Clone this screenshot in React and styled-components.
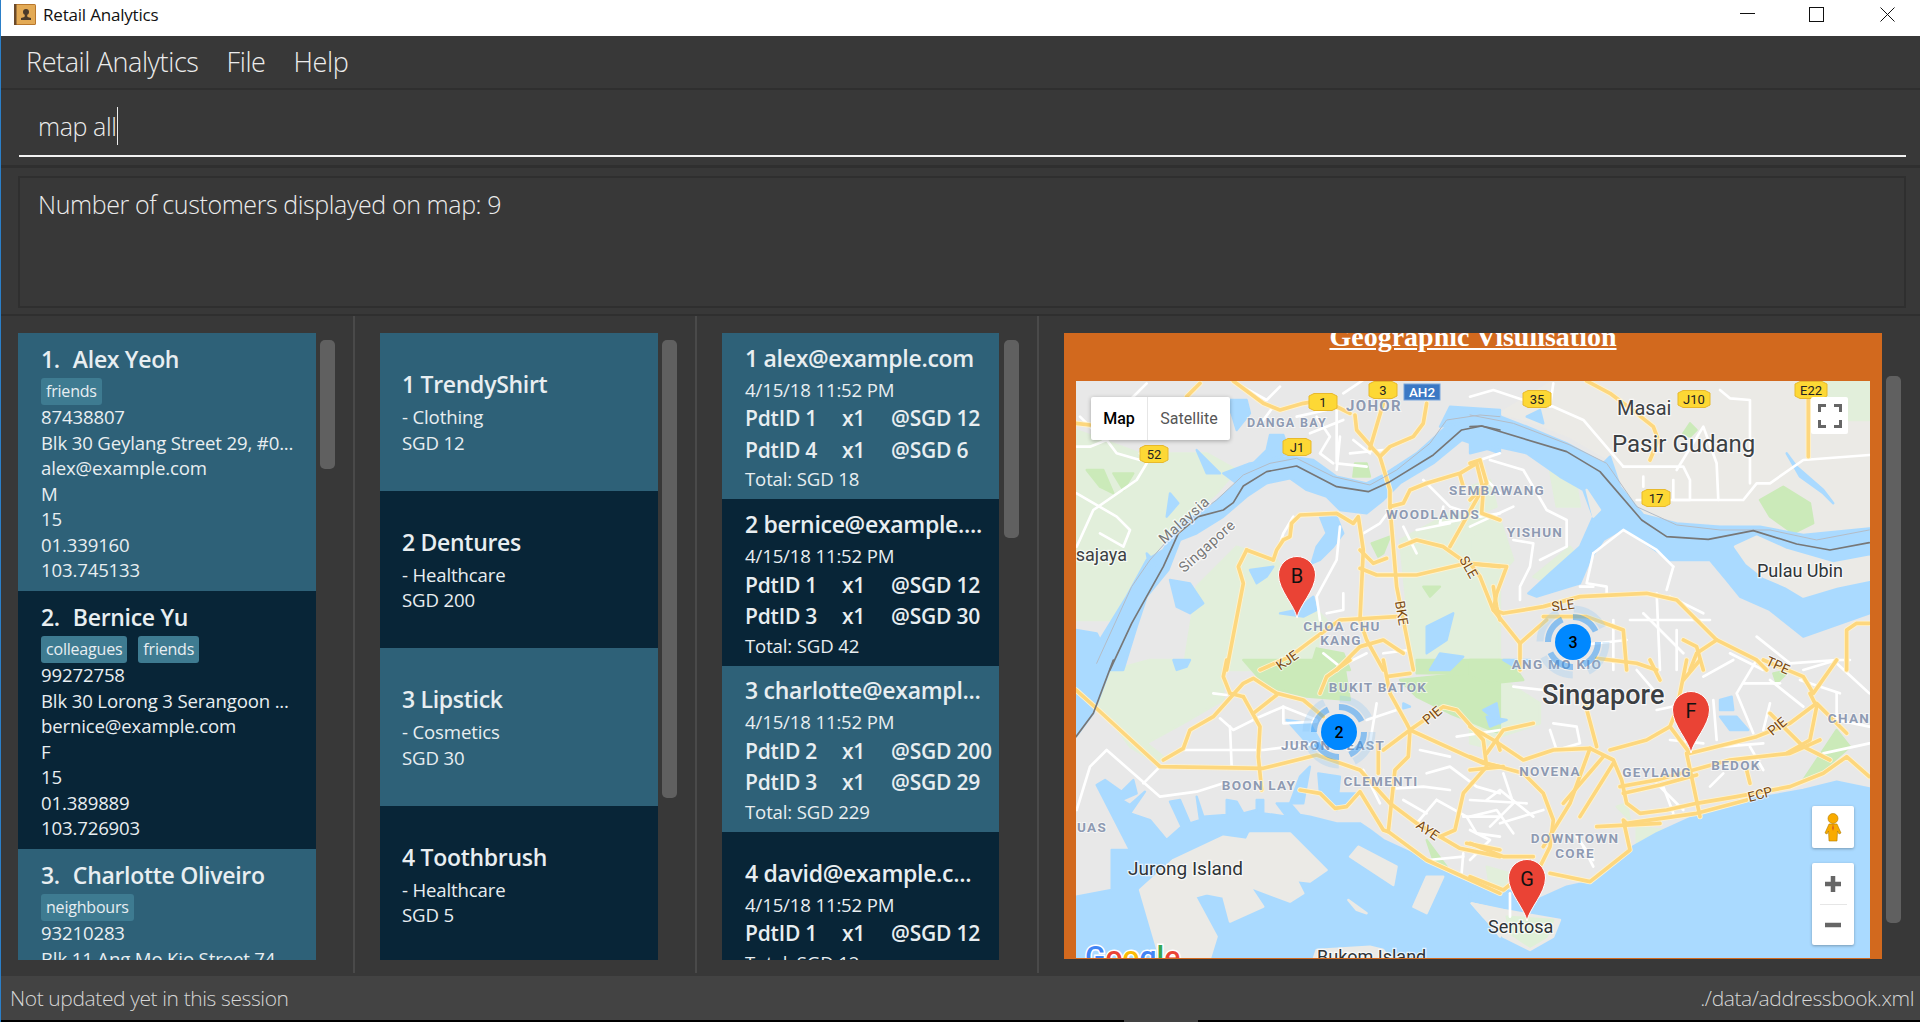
import React from "react";
import styled, { createGlobalStyle } from "styled-components";

const GlobalStyle = createGlobalStyle`
  html, body { margin: 0; padding: 0; background: #383838; }
  * { box-sizing: border-box; }
`;

const UI_FONT = `"Open Sans", "Noto Sans", sans-serif`;
const LIGHT_FONT = `"Open Sans", "Noto Sans", sans-serif`;
const MAP_FONT = `Roboto, "Liberation Sans", sans-serif`;

const Window = styled.div`
  width: 1920px;
  height: 1022px;
  display: flex;
  flex-direction: column;
  background: #383838;
  border-left: 1px solid #2b7fc8;
  overflow: hidden;
  font-family: ${UI_FONT};
`;

const TitleBar = styled.div`
  height: 36px;
  flex: none;
  background: #fff;
  display: flex;
  align-items: center;
  padding: 0 0 7px 14px;
  color: #111;
  font-size: 17px;
  margin-left: -1px;
`;

const TitleText = styled.span`
  margin-left: 7px;
  flex: 1;
  letter-spacing: -0.2px;
`;

const WinButton = styled.svg`
  width: 15px;
  height: 15px;
  margin-right: ${(p) => p.$gap}px;
  margin-top: ${(p) => p.$top}px;
`;

const MenuBar = styled.div`
  height: 54px;
  flex: none;
  display: flex;
  align-items: center;
  padding: 0 0 2px 25px;
  border-bottom: 2px solid #2f2f2f;
  color: #ececec;
  font-family: ${LIGHT_FONT};
  font-weight: 300;
  font-size: 27px;
  letter-spacing: -0.4px;
`;

const MenuItem = styled.span`
  margin-right: ${(p) => p.$gap}px;
`;

const CommandArea = styled.div`
  height: 78px;
  flex: none;
  padding: 0 14px 0 18px;
  border-bottom: 3px solid #2f2f2f;
`;

const CommandBox = styled.div`
  height: 67px;
  display: flex;
  align-items: center;
  padding: 6px 0 0 19px;
  border-bottom: 2px solid #f2f2f2;
  color: #ececec;
  font-family: ${LIGHT_FONT};
  font-weight: 300;
  font-size: 25px;
  letter-spacing: -0.4px;
`;

const Caret = styled.span`
  width: 1px;
  height: 38px;
  margin-left: 1px;
  background: #ececec;
`;

const ResultArea = styled.div`
  height: 148px;
  flex: none;
  padding: 8px 14px 0 17px;
  border-bottom: 2px solid #2f2f2f;
`;

const ResultBox = styled.div`
  height: 132px;
  padding: 9px 0 0 18px;
  border: 2px solid #2f2f2f;
  color: #ececec;
  font-family: ${LIGHT_FONT};
  font-weight: 300;
  font-size: 25px;
  letter-spacing: -0.4px;
`;

const Panels = styled.div`
  height: 660px;
  flex: none;
  display: flex;
`;

const Panel = styled.div`
  width: ${(p) => p.$width}px;
  flex: none;
  display: flex;
  align-items: flex-start;
  padding: 17px 0 0 ${(p) => p.$left}px;
  border-right: ${(p) => (p.$last ? "none" : "2px solid #4a4a4a")};
  margin-bottom: 3px;
`;

const List = styled.div`
  width: ${(p) => p.$width}px;
  height: 627px;
  flex: none;
  overflow: hidden;
`;

const Thumb = styled.div`
  width: 15px;
  height: ${(p) => p.$height}px;
  flex: none;
  margin: ${(p) => p.$top}px 0 0 ${(p) => p.$gap}px;
  border-radius: 5px;
  background: #606060;
`;

const Card = styled.div`
  height: ${(p) => p.$height}px;
  background: ${(p) => (p.$dark ? "#082537" : "#2e6178")};
  color: #e8eef1;
`;

const PersonCard = styled(Card)`
  padding: 12px 0 0 23px;
  white-space: nowrap;
`;

const CardTitle = styled.div`
  height: 28px;
  line-height: 28px;
  font-size: 23px;
  font-weight: 600;
  letter-spacing: -0.3px;
`;

const PersonId = styled.span`
  margin-right: 13px;
`;

const Tags = styled.div`
  display: flex;
  gap: 11px;
  margin: 5px 0 -1px;
`;

const Tag = styled.span`
  height: 27px;
  line-height: 27px;
  padding: 0 5px;
  border-radius: 3px;
  background: #3e7b91;
  font-size: 16px;
  font-weight: 500;
  letter-spacing: -0.2px;
`;

const Line = styled.div`
  height: 25.5px;
  line-height: 25.5px;
  font-size: 18.6px;
  letter-spacing: -0.15px;
`;

const ProductCard = styled(Card)`
  display: flex;
  flex-direction: column;
  justify-content: center;
  padding: 2px 0 0 22px;
`;

const ProductName = styled(CardTitle)`
  margin-bottom: 6px;
`;

const OrderCard = styled(Card)`
  display: flex;
  flex-direction: column;
  justify-content: center;
  padding: 3px 0 0 23px;
  white-space: nowrap;
`;

const OrderDate = styled(Line)`
  margin: 5px 0 1px;
`;

const OrderRow = styled.div`
  display: grid;
  grid-template-columns: 97px 49px auto;
  height: 31.5px;
  line-height: 31.5px;
  font-size: 21px;
  font-weight: 600;
  letter-spacing: -0.2px;
`;

const MapPane = styled.div`
  width: 818px;
  height: 626px;
  flex: none;
  padding: 0 12px;
  background: #d2691e;
  overflow: hidden;
`;

const MapHeading = styled.div`
  height: 48px;
  margin-top: -9px;
  margin-bottom: 9px;
  line-height: 26px;
  text-align: center;
  font-family: "Liberation Serif", serif;
  font-weight: 700;
  font-size: 28px;
  color: #fff;
  text-decoration: underline;
`;

const MapFrame = styled.div`
  position: relative;
  width: 794px;
  height: 577px;
  overflow: hidden;
  background: #e8e8e8;
`;

const MapSvg = styled.svg`
  display: block;
  width: 794px;
  height: 577px;
`;

const TypeControl = styled.div`
  position: absolute;
  left: 15px;
  top: 16px;
  width: 139px;
  height: 43px;
  display: flex;
  background: #fff;
  border-radius: 2px;
  box-shadow: 0 1px 4px rgba(0, 0, 0, 0.3);
  font-family: ${MAP_FONT};
  font-size: 16px;
`;

const TypeOption = styled.div`
  display: flex;
  align-items: center;
  justify-content: center;
  width: ${(p) => p.$width}px;
  color: ${(p) => (p.$active ? "#000" : "#565656")};
  font-weight: ${(p) => (p.$active ? 500 : 400)};
  border-right: ${(p) => (p.$active ? "1px solid #e6e6e6" : "none")};
`;

const IconControl = styled.div`
  position: absolute;
  left: ${(p) => p.$left}px;
  top: ${(p) => p.$top}px;
  width: ${(p) => p.$width}px;
  height: ${(p) => p.$height}px;
  display: flex;
  flex-direction: column;
  align-items: center;
  justify-content: center;
  background: #fff;
  border-radius: 2px;
  box-shadow: ${(p) => (p.$flat ? "none" : "0 1px 3px rgba(0, 0, 0, 0.3)")};
`;

const ZoomDivider = styled.div`
  width: 27px;
  height: 1px;
  margin: 12px 0;
  background: #e6e6e6;
`;

const StatusBar = styled.div`
  height: 44px;
  flex: none;
  display: flex;
  align-items: center;
  justify-content: space-between;
  padding: 0 6px 0 9px;
  background: #434343;
  color: #d6d6d6;
  font-family: ${LIGHT_FONT};
  font-weight: 300;
  font-size: 21px;
  letter-spacing: -0.4px;
`;

const BottomEdge = styled.div`
  height: 2px;
  flex: none;
  background: linear-gradient(to right, #000 1123px, #434343 1123px, #434343 1197px, #000 1197px);
`;

const people = [
  { id: "1.", name: "Alex Yeoh", tags: ["friends"], lines: ["87438807", "Blk 30 Geylang Street 29, #0...", "alex@example.com", "M", "15", "01.339160", "103.745133"] },
  { id: "2.", name: "Bernice Yu", tags: ["colleagues", "friends"], lines: ["99272758", "Blk 30 Lorong 3 Serangoon ...", "bernice@example.com", "F", "15", "01.389889", "103.726903"] },
  { id: "3.", name: "Charlotte Oliveiro", tags: ["neighbours"], lines: ["93210283", "Blk 11 Ang Mo Kio Street 74, ..."] },
];

const products = [
  { name: "1 TrendyShirt", type: "- Clothing", price: "SGD 12" },
  { name: "2 Dentures", type: "- Healthcare", price: "SGD 200" },
  { name: "3 Lipstick", type: "- Cosmetics", price: "SGD 30" },
  { name: "4 Toothbrush", type: "- Healthcare", price: "SGD 5" },
];

const orders = [
  { name: "1 alex@example.com", rows: [["PdtID 1", "@SGD 12"], ["PdtID 4", "@SGD 6"]], total: "Total: SGD 18" },
  { name: "2 bernice@example....", rows: [["PdtID 1", "@SGD 12"], ["PdtID 3", "@SGD 30"]], total: "Total: SGD 42" },
  { name: "3 charlotte@exampl...", rows: [["PdtID 2", "@SGD 200"], ["PdtID 3", "@SGD 29"]], total: "Total: SGD 229" },
  { name: "4 david@example.c...", rows: [["PdtID 1", "@SGD 12"]], total: "Total: SGD 12" },
];

// map drawing data, one block per quarter of the map, drawn at 1/3 scale
const quarters = [
  {
    x: 1050, y: 320,
    green: [
      "78,330 270,400 470,400 560,450 500,520 420,590 350,650 300,720 240,800 190,900 78,900",
      "400,1050 440,800 560,680 680,720 760,830 830,900 780,1050",
      "1050,660 1200,580 1350,600 1350,1050 1090,1050",
    ],
    bright: [
      "110,450 160,450 190,520 150,500", "190,460 250,460 220,510", "915,430 950,430 960,470 910,470",
      "965,670 1020,650 1000,700 985,710", "780,1050 800,985 880,1000 900,1050", "1120,800 1170,800 1140,830",
    ],
    water: [
      "120,1050 150,960 230,830 290,720 340,690 390,610 480,560 560,490 520,460 600,430 720,410 790,420 860,470 950,490 1000,465 1100,400 1200,310 1290,280 1350,285 1350,400 1235,360 1150,430 1050,490 1000,540 950,580 870,570 830,530 770,510 720,475 650,490 590,530 520,590 440,640 390,660 355,750 290,830 260,920 220,1050",
      "78,930 140,940 170,1000 120,1050 78,1050",
      "600,440 650,390 660,345 700,345 720,400",
      "520,240 590,240 600,280 560,330 545,280",
      "1170,320 1200,260 1350,270 1350,290 1230,310",
      "810,590 860,590 880,640 850,680 810,720 785,730 800,680 830,640",
      "600,750 670,740 650,770 620,790", "690,880 740,870 790,830 800,870 760,890",
      "360,780 420,790 460,850 420,880 380,860", "1130,920 1210,880 1190,960 1130,1000",
      "1170,1000 1240,1010 1200,1050 1140,1050", "290,700 320,730 300,750", "360,520 385,550 350,590",
      "440,390 480,430 510,460 470,460",
    ],
    streets: [
      "80,520 200,590 240,630 220,680 150,640", "80,680 130,570 260,480 290,430 270,400", "80,380 120,380 170,360 200,400 270,420",
      "240,240 290,190", "560,190 650,240 690,200", "670,260 640,300", "870,350 860,450", "800,290 840,350 810,400 850,430",
      "960,400 910,360", "880,220 940,180", "1120,480 1200,560 1290,590 1350,580", "1180,560 1170,610 1230,600",
      "870,620 860,720 800,830 810,900", "880,820 880,870 830,880", "940,640 990,610 1020,570", "1060,620 1100,700",
      "1290,420 1350,400", "1350,520 1300,470", "730,590 700,640 680,700", "1000,1000 1080,990", "820,1000 870,1040 950,1000",
      "860,260 860,430 950,440", "740,290 830,270", "90,290 160,360", "1100,630 1200,610", "780,340 880,300", "900,400 1000,390",
    ],
    roads: [
      "550,183 640,250 690,270 760,250 820,240 900,280", "410,230 450,190", "78,310 120,315",
      "915,285 920,330 990,410 1020,510 1020,560 1040,800 1090,1050", "1130,250 1120,310 1090,350 1020,380 990,410",
      "960,385 1000,250", "1280,430 1230,460 1130,490 1080,510 1060,550 1020,560", "1280,430 1300,510 1295,580 1350,600",
      "1230,465 1240,500", "1290,520 1200,680", "1050,680 1100,660 1180,680 1250,730 1350,740",
      "670,720 680,690 700,660 720,650 725,610 750,585 860,580 910,610 925,590 940,690 930,900 950,960 1000,1050",
      "930,690 970,730 1010,715", "930,745 980,765 1100,765 1250,730", "590,690 670,720", "590,690 565,740 580,790 530,1050",
      "630,1050 720,1010 800,950 870,900 1040,890", "860,1050 930,980 1000,960 1060,1000", "1330,800 1340,860 1350,900",
    ],
    border: "180,1050 245,910 340,740 385,640 445,590 520,570 550,548 580,498 650,455 740,438 860,500 955,515 1020,485 1150,405 1235,330 1295,318 1350,330",
    dashes: "140,1030 245,800 300,720 390,620 500,540 580,465 660,430 740,415 850,470 960,495 1040,450 1140,370 1190,300 1290,285 1350,290",
  },
  {
    x: 1470, y: 320,
    beige: ["250,183 1198,183 1198,640 1000,640 850,620 620,600 500,580 420,420 300,350 170,300 90,280"],
    green: [
      "1000,183 1198,183 1198,300 1100,300 1040,260", "0,650 90,600 130,720 60,800 0,760", "190,770 300,680 330,720 240,790",
      "0,500 60,480 80,560 0,590", "240,450 320,500 330,560 260,560",
    ],
    bright: ["870,540 940,500 1020,550 1030,610 970,640 900,590", "640,340 660,310 680,330 660,350"],
    water: [
      "0,285 80,285 170,320 290,370 400,430 420,410 450,500 520,585 620,610 750,620 870,620 1000,645 1198,625 1198,880 1100,915 1000,950 900,870 810,830 770,780 720,720 600,720 570,700 460,625 400,660 360,720 330,790 200,830 175,820 240,760 330,680 370,590 340,510 270,470 170,400 80,380 0,400",
      "170,290 210,270 220,310", "950,400 980,440 1060,510 1090,550 1060,520 990,470",
    ],
    island: ["795,680 860,650 950,690 1090,730 1198,710 1198,780 1100,800 1000,830 950,800 880,770 830,730", "350,510 390,570 370,590"],
    streets: [
      "0,230 70,210 160,240 250,260 340,300 460,440", "250,190 240,260", "460,440 640,440 660,480 660,540 610,540 610,480",
      "500,540 820,540 860,490 900,490 1000,420 1198,405", "750,210 780,235 840,240 840,490", "620,450 700,320 740,430 745,540",
      "60,420 160,450 230,570 290,600 290,680 210,720", "130,660 190,670 180,740 150,800 150,840", "370,700 460,630 560,690 610,740",
      "370,700 350,790 410,800 410,830", "330,800 370,800", "610,740 590,810", "560,820 570,1050", "480,900 720,900",
      "860,950 960,1030 1100,1020 1140,1020", "1000,1050 1100,1020", "520,470 520,500", "430,900 430,1050", "600,830 700,880",
      "0,620 130,560", "290,980 470,960", "520,880 640,1000", "620,930 620,1050", "780,1000 880,1050",
    ],
    roads: [
      "350,183 420,220 500,280 550,320 565,360 540,420", "1015,230 1015,410", "0,430 30,420 50,490 0,540",
      "0,730 110,740 80,820 70,870 150,970 150,1050", "0,730 30,770 70,870 100,880 220,860 330,830 530,820 620,840 680,900 740,960 860,1020 890,1050",
      "220,890 350,890 460,930 470,1050", "150,970 230,900", "740,960 680,1000 660,1050", "640,960 680,980 700,1050", "380,1015 500,1030 560,1050",
      "1130,1050 1130,930 1160,910 1198,910",
    ],
    border: "0,320 35,318 290,395 390,455 515,600 590,650 715,658 850,632 980,672 1080,690 1198,668",
    dashes: "0,285 130,310 300,375 410,430 500,560 620,615 750,630 900,630 1040,660 1198,630",
  },
  {
    x: 1050, y: 660,
    green: [
      "78,60 300,0 520,0 520,120 400,190 290,250 340,290 320,310 240,260 160,150 78,100",
    ],
    bright: [
      "580,0 880,0 900,120 770,110 650,80", "1050,60 1350,30 1350,220 1200,160 1100,110", "1100,0 1350,0 1350,40 1100,40",
      "1130,540 1190,620 1150,600",
    ],
    water: [
      "78,710 185,690 185,570 240,570 140,375 165,360 215,395 250,360 260,400 215,420 240,435 285,395 240,460 300,480 350,540 395,500 360,425 390,420 420,490 450,480 440,410 460,470 530,465 530,420 560,425 580,460 620,450 620,420 640,420 640,460 710,470 680,430 720,430 750,465 780,470 860,490 930,490 960,510 1000,540 1130,600 1210,650 1350,710 1350,1086 78,1086",
      "78,0 190,0 130,160 78,230", "805,340 870,350 865,400 930,400 860,450 810,400", "710,180 780,190 820,260 790,270",
      "750,350 780,320 760,430 720,430", "370,0 420,0 410,20 380,30", "1300,150 1340,130 1350,190", "1060,130 1080,140 1060,145",
    ],
    island: [
      "600,520 720,520 830,630 780,665 740,660 760,700 720,725 600,680 640,740 540,785 520,710 470,700 435,710 500,830 480,895 330,895 270,690 370,600 520,530 590,540",
      "960,860 1000,870 1020,900 790,900 800,870", "895,720 950,760 920,750", "900,590 925,560 1040,620 1030,675", "1090,740 1130,650 1180,650 1130,760",
      "1265,730 1350,750 1350,830 1310,780",
    ],
    streets: [
      "80,450 120,320 170,270 330,410 440,395 520,370", "280,370 330,320", "400,270 540,270 640,270 800,250", "540,200 545,320",
      "510,175 550,210 630,170 700,140 800,180", "700,140 700,190 800,185", "950,180 1040,150", "1130,340 1200,320 1280,380 1350,400",
      "1160,420 1250,470 1280,520 1350,530", "1040,385 1120,380 1200,390", "1135,600 1240,590", "1100,490 1160,420", "940,330 990,430",
      "490,100 530,105", "1220,230 1350,210", "1240,580 1235,640", "1110,270 1200,290", "980,130 960,250", "1060,420 1130,460", "1240,470 1350,470",
    ],
    roads: [
      "78,90 145,150 330,320 640,325 800,285 930,330 1020,430 1100,490 1170,530 1230,565 1350,590",
      "340,300 400,265 420,210 490,170 580,70 610,55 680,100 760,120 820,170", "580,110 630,200 625,290 635,390", "610,160 680,105",
      "530,0 520,50 540,100 580,110", "810,100 830,50 900,0", "1000,0 1010,50 1080,40", "1010,50 1020,100 1070,190 1080,210 1300,310 1350,320",
      "1000,270 1080,210 1180,140 1220,150 1300,240 1310,320 1240,400 1215,510 1170,530", "1080,210 1075,290 1035,330 1015,515 1130,600 1350,700",
      "985,250 985,340", "750,390 810,400 855,445 890,440 930,395 1000,510 1015,515", "1340,240 1350,270", "1250,550 1350,570",
    ],
    border: "190,0 130,160 78,230",
  },
  {
    x: 1470, y: 660,
    green: [
      "0,100 100,60 210,130 210,190 90,230 40,260 0,250", "50,620 120,640 100,690 60,680", "500,500 580,510 500,550", "440,440 480,480 470,430",
    ],
    bright: ["1000,360 1100,210 1140,260 1060,330", "0,0 120,0 160,60 60,70 0,50", "910,40 960,30 920,70"],
    water: [
      "0,700 110,690 200,720 290,680 360,665 480,565 560,520 680,465 830,420 1000,390 1100,365 1198,385 1198,1086 0,1086",
      "750,120 785,110 790,150 750,150", "750,170 800,170 835,210 780,210", "50,170 110,180 60,200", "100,0 180,0 150,30",
    ],
    island: ["5,730 100,750 270,780 250,830 180,870 100,830 40,770"],
    sentosa: "110,770 250,780 230,830 180,860 120,820",
    streets: [
      "0,510 60,540 0,600", "50,420 90,390 190,470", "250,190 320,200 330,250 260,270 240,210", "600,240 700,250", "730,120 740,240",
      "860,0 800,100 850,220", "900,60 1000,140", "1100,10 1198,100", "560,370 640,450", "580,380 610,460", "130,80 220,90",
      "0,420 170,430", "820,70 930,70", "90,490 220,450", "760,260 880,250", "1100,100 1100,180", "340,560 370,620", "320,530 370,600",
      "120,700 120,770", "720,380 760,340", "840,260 880,330", "500,30 560,100", "700,50 790,0", "1060,280 1198,250",
      "0,470 80,450 130,520", "100,340 130,430 60,500", "560,150 700,120", "900,130 880,210", "990,60 1110,100", "1100,180 1198,200",
    ],
    roads: [
      "0,200 70,240 160,300 250,270 360,265 430,300 455,360 470,430 510,460 590,450 680,430 800,410 960,380 1060,340 1130,290 1198,350",
      "0,330 100,320", "50,280 100,210 190,190", "0,290 50,310 160,340 220,400 250,480 240,560 210,620 150,650 100,690 0,650",
      "0,550 100,590 190,590", "240,640 360,665 480,570 460,480 470,490 680,460 830,420", "380,500 570,490", "360,265 300,430 220,560",
      "430,310 330,470", "400,290 280,430", "450,380 560,360 780,300 960,280 1050,240", "460,400 570,375 680,345",
      "420,270 530,240 600,200 620,150 650,0", "540,0 570,60", "340,110 380,260", "690,0 640,60", "650,280 690,470", "830,330 840,370",
      "1020,100 1040,140 1020,240 950,280", "600,200 660,280 860,230 960,190 1040,130 1130,220", "880,0 1000,50 1030,100 1100,0", "900,160 1000,260 1080,300",
    ],
  },
];

const districts = [
  ["JOHOR", 1374, 411, 15], ["DANGA BAY", 1287, 427, 12.5], ["SEMBAWANG", 1497, 495, 13.5], ["WOODLANDS", 1433, 519, 13.5],
  ["YISHUN", 1535, 537, 13.5], ["CHOA CHU", 1342, 631, 13.5], ["KANG", 1341, 645, 13.5], ["BUKIT BATOK", 1378, 692, 13.5],
  ["JURONG EAST", 1333, 750, 13.5], ["CLEMENTI", 1381, 786, 13.5], ["BOON LAY", 1259, 790, 13.5], ["UAS", 1092, 832, 13.5],
  ["NOVENA", 1550, 776, 13.5], ["GEYLANG", 1657, 777, 13.5], ["BEDOK", 1736, 770, 13.5], ["DOWNTOWN", 1575, 843, 13.5],
  ["CORE", 1575, 858, 13.5], ["ANG MO KIO", 1557, 669, 13.5], ["CHAN", 1849, 723, 13.5],
];

const places = [
  ["Masai", 1617, 415, 20, 400, "#3c4043"], ["Pasir Gudang", 1612, 452, 24, 400, "#3c4043"], ["Pulau Ubin", 1757, 577, 18, 400, "#2f3437"],
  ["Singapore", 1542, 704, 27, 500, "#3c4043"], ["Jurong Island", 1128, 875, 19, 400, "#2f3437"], ["Sentosa", 1488, 933, 18, 400, "#2f3437"],
  ["Bukom Island", 1317, 963, 18, 400, "#2f3437"],
];

const roadCodes = [
  ["SLE", 1469, 567, 60], ["SLE", 1563, 605, -8], ["BKE", 1402, 613, 80], ["KJE", 1287, 660, -35], ["PIE", 1432, 715, -40],
  ["AYE", 1428, 830, 35], ["TPE", 1778, 665, 25], ["PIE", 1777, 726, -40], ["ECP", 1760, 794, -15],
];

const shields = [
  ["1", 1323, 402, 28], ["3", 1383, 390, 28], ["52", 1154, 454, 28], ["J1", 1297, 447, 28],
  ["35", 1537, 399, 28], ["J10", 1694, 399, 32], ["E22", 1811, 390, 32], ["17", 1656, 498, 28],
];

const Polys = ({ quarter, items, fill, stroke, width }) =>
  (items || []).map((points, i) => (
    <g key={i} transform={`translate(${quarter.x} ${quarter.y}) scale(0.3333)`}>
      {fill ? (
        <polygon points={points} fill={fill} stroke={fill} strokeWidth="7" strokeLinejoin="round" />
      ) : (
        <polyline points={points} fill="none" stroke={stroke} strokeWidth={width} strokeLinejoin="round" strokeLinecap="round" />
      )}
    </g>
  ));

const Shield = ({ label, x, y, w }) => {
  const h = w / 2;
  return (
    <g transform={`translate(${x} ${y})`}>
      <polygon
        points={`${-h},-6 ${-h + 5},-8.5 ${h - 5},-8.5 ${h},-6 ${h},6 ${h - 5},8.5 ${-h + 5},8.5 ${-h},6`}
        fill="#fdd835"
        stroke="#e8b92c"
        strokeWidth="1"
      />
      <text y="5" textAnchor="middle" fontFamily={MAP_FONT} fontSize="13" fill="#222">{label}</text>
    </g>
  );
};

const Pin = ({ letter, x, y }) => (
  <g transform={`translate(${x} ${y})`}>
    <path d="M0 42C-2 30-18.5 14-18.5-1A18.5 18.5 0 1 1 18.5-1C18.5 14 2 30 0 42Z" fill="#ea4335" stroke="#fff" strokeWidth="1" />
    <text y="7" textAnchor="middle" fontFamily={MAP_FONT} fontSize="20" fill="#111">{letter}</text>
  </g>
);

const Cluster = ({ count, x, y }) => (
  <g transform={`translate(${x} ${y})`}>
    <circle r="33" fill="none" stroke="#8cc4f5" strokeWidth="7" opacity="0.28" strokeDasharray="36 16" />
    <circle r="25" fill="none" stroke="#2c96f4" strokeWidth="6" opacity="0.5" strokeDasharray="28 11" />
    <circle r="18" fill="#0088ff" />
    <text y="6" textAnchor="middle" fontFamily={MAP_FONT} fontWeight="500" fontSize="16" fill="#000">{count}</text>
  </g>
);

const SingaporeMap = () => (
  <MapSvg viewBox="1076 381 794 577">
    <rect x="1076" y="381" width="794" height="577" fill="#e8e8e8" />
    {quarters.map((q) => <Polys key={q.x + "b" + q.y} quarter={q} items={q.beige} fill="#ebeae6" />)}
    {quarters.map((q) => <Polys key={q.x + "g" + q.y} quarter={q} items={q.green} fill="#e2efdb" />)}
    {quarters.map((q) => <Polys key={q.x + "h" + q.y} quarter={q} items={q.bright} fill="#cbeab9" />)}
    {quarters.map((q) => <Polys key={q.x + "w" + q.y} quarter={q} items={q.water} fill="#aadaff" />)}
    {quarters.map((q) => <Polys key={q.x + "i" + q.y} quarter={q} items={q.island} fill="#ebeae6" />)}
    {quarters.map((q) => <Polys key={q.x + "t" + q.y} quarter={q} items={q.sentosa ? [q.sentosa] : []} fill="#dff0d8" />)}
    {quarters.map((q) => <Polys key={q.x + "s" + q.y} quarter={q} items={q.streets} stroke="#fff" width={8} />)}
    {quarters.map((q) => <Polys key={q.x + "c" + q.y} quarter={q} items={q.roads} stroke="#fff3cf" width={16} />)}
    {quarters.map((q) => <Polys key={q.x + "r" + q.y} quarter={q} items={q.roads} stroke="#fdd77e" width={11} />)}
    {quarters.map((q) => <Polys key={q.x + "d" + q.y} quarter={q} items={q.dashes ? [q.dashes] : []} stroke="#b4bcc6" width={3} />)}
    {quarters.map((q) => <Polys key={q.x + "l" + q.y} quarter={q} items={q.border ? [q.border] : []} stroke="#777" width={5} />)}

    <g fontFamily={MAP_FONT} fontWeight="700" fill="#8e9ab2" textAnchor="middle" stroke="#fff" strokeOpacity="0.6" strokeWidth="2" paintOrder="stroke" letterSpacing="1.3">
      {districts.map(([label, x, y, size]) => (
        <text key={label} x={x} y={y} fontSize={size}>{label}</text>
      ))}
    </g>
    <g fontFamily={MAP_FONT} stroke="#fff" strokeOpacity="0.7" strokeWidth="2.5" paintOrder="stroke">
      {places.map(([label, x, y, size, weight, color]) => (
        <text key={label} x={x} y={y} fontSize={size} fontWeight={weight} fill={color}>{label}</text>
      ))}
      <text x="1127" y="561" fontSize="18" fill="#3c4043" textAnchor="end">Nusajaya</text>
      <text x="1184" y="525" fontSize="14.5" fill="#777" textAnchor="middle" letterSpacing="0.6" transform="rotate(-42 1184 520)">Malaysia</text>
      <text x="1207" y="551" fontSize="14.5" fill="#777" textAnchor="middle" letterSpacing="0.6" transform="rotate(-42 1207 546)">Singapore</text>
    </g>
    <g fontFamily={MAP_FONT} fill="#7a4a10" textAnchor="middle" fontSize="13.5" stroke="#fff" strokeOpacity="0.6" strokeWidth="2" paintOrder="stroke">
      {roadCodes.map(([label, x, y, angle]) => (
        <text key={label + x} x={x} y={y + 5} transform={`rotate(${angle} ${x} ${y})`}>{label}</text>
      ))}
    </g>

    {shields.map(([label, x, y, w]) => <Shield key={label} label={label} x={x} y={y} w={w} />)}
    <rect x="1404" y="384" width="36" height="16" fill="#3b78c4" stroke="#7ba6dc" />
    <text x="1422" y="397" textAnchor="middle" fontFamily={MAP_FONT} fontWeight="500" fontSize="13.5" fill="#fff">AH2</text>

    <text x="1085" y="967" fontFamily={MAP_FONT} fontWeight="500" fontSize="30" stroke="#fff" strokeWidth="3" paintOrder="stroke">
      <tspan fill="#4285f4">G</tspan><tspan fill="#ea4335">o</tspan><tspan fill="#fbbc05">o</tspan><tspan fill="#4285f4">g</tspan><tspan fill="#34a853">l</tspan><tspan fill="#ea4335">e</tspan>
    </text>

    <Cluster count="3" x={1573} y={642} />
    <Cluster count="2" x={1339} y={732} />
    <Pin letter="B" x={1297} y={576} />
    <Pin letter="F" x={1691} y={711} />
    <Pin letter="G" x={1527} y={879} />
  </MapSvg>
);

const AppIcon = () => (
  <svg width="22" height="21" viewBox="0 0 22 21">
    <rect x="0" y="0" width="22" height="21" rx="1.5" fill="#b9772c" />
    <rect x="2" y="1" width="19" height="19" fill="#e3aa55" />
    <rect x="0" y="0" width="2.5" height="21" fill="#6b4a2a" />
    <circle cx="12" cy="8" r="3" fill="#4a3a2a" />
    <path d="M11 10h2l.5 3 3.5 1v2H7v-2l3.5-1z" fill="#4a3a2a" />
  </svg>
);

const App = () => (
  <>
    <GlobalStyle />
    <Window>
      <TitleBar>
        <AppIcon />
        <TitleText>Retail Analytics</TitleText>
        <WinButton $gap={54} $top={0} viewBox="0 0 15 15">
          <path d="M0 6.5h15" stroke="#111" strokeWidth="1" />
        </WinButton>
        <WinButton $gap={56} $top={-1} viewBox="0 0 15 15">
          <rect x="0.5" y="0.5" width="14" height="14" fill="none" stroke="#111" />
        </WinButton>
        <WinButton $gap={25} $top={-1} viewBox="0 0 15 15">
          <path d="M0.5 0.5l14 14M14.5 0.5l-14 14" stroke="#111" strokeWidth="1" />
        </WinButton>
      </TitleBar>

      <MenuBar>
        <MenuItem $gap={28}>Retail Analytics</MenuItem>
        <MenuItem $gap={28}>File</MenuItem>
        <MenuItem $gap={0}>Help</MenuItem>
      </MenuBar>

      <CommandArea>
        <CommandBox>
          map all<Caret />
        </CommandBox>
      </CommandArea>

      <ResultArea>
        <ResultBox>Number of customers displayed on map: 9</ResultBox>
      </ResultArea>

      <Panels>
        <Panel $width={354} $left={17}>
          <List $width={298}>
            {people.map((p, i) => (
              <PersonCard key={p.id} $height={258} $dark={i % 2 === 1}>
                <CardTitle><PersonId>{p.id}</PersonId>{p.name}</CardTitle>
                <Tags>{p.tags.map((t) => <Tag key={t}>{t}</Tag>)}</Tags>
                {p.lines.map((l, j) => <Line key={j}>{l}</Line>)}
              </PersonCard>
            ))}
          </List>
          <Thumb $gap={4} $top={7} $height={129} />
        </Panel>

        <Panel $width={342} $left={25}>
          <List $width={278}>
            {products.map((p, i) => (
              <ProductCard key={p.name} $height={157.5} $dark={i % 2 === 1}>
                <ProductName>{p.name}</ProductName>
                <Line>{p.type}</Line>
                <Line>{p.price}</Line>
              </ProductCard>
            ))}
          </List>
          <Thumb $gap={4} $top={7} $height={458} />
        </Panel>

        <Panel $width={342} $left={25}>
          <List $width={277}>
            {orders.map((o, i) => (
              <OrderCard key={o.name} $height={166.4} $dark={i % 2 === 1}>
                <CardTitle>{o.name}</CardTitle>
                <OrderDate>4/15/18 11:52 PM</OrderDate>
                {o.rows.map(([id, price]) => (
                  <OrderRow key={id}><span>{id}</span><span>x1</span><span>{price}</span></OrderRow>
                ))}
                <Line>{o.total}</Line>
              </OrderCard>
            ))}
          </List>
          <Thumb $gap={5} $top={7} $height={198} />
        </Panel>

        <Panel $width={881} $left={25} $last>
          <MapPane>
            <MapHeading>Geographic Visulisation</MapHeading>
            <MapFrame>
              <SingaporeMap />
              <TypeControl>
                <TypeOption $active $width={57}>Map</TypeOption>
                <TypeOption $width={82}>Satellite</TypeOption>
              </TypeControl>
              <IconControl $left={735} $top={16} $width={37} $height={37} $flat>
                <svg width="24" height="24" viewBox="0 0 24 24" fill="none" stroke="#666" strokeWidth="3">
                  <path d="M1.5 8V1.5H8M16 1.5h6.5V8M22.5 16v6.5H16M8 22.5H1.5V16" />
                </svg>
              </IconControl>
              <IconControl $left={736} $top={425} $width={42} $height={42}>
                <svg width="18" height="29" viewBox="0 0 18 29">
                  <circle cx="9" cy="5.5" r="5" fill="#f9ab00" stroke="#b27c00" strokeWidth="0.6" />
                  <path d="M5 11h8l4 9-2 1-1.5-3-.5 10H5l-.5-10L3 21l-2-1z" fill="#f9ab00" stroke="#b27c00" strokeWidth="0.6" />
                  <path d="M9 11l1 4-1 3-1-3z" fill="#d9661f" />
                </svg>
              </IconControl>
              <IconControl $left={736} $top={482} $width={42} $height={82}>
                <svg width="16" height="16" viewBox="0 0 16 16"><path d="M8 0v16M0 8h16" stroke="#666" strokeWidth="4.5" /></svg>
                <ZoomDivider />
                <svg width="16" height="16" viewBox="0 0 16 16"><path d="M0 8h16" stroke="#666" strokeWidth="4.5" /></svg>
              </IconControl>
            </MapFrame>
          </MapPane>
          <Thumb $gap={4} $top={43} $height={547} />
        </Panel>
      </Panels>

      <StatusBar>
        <span>Not updated yet in this session</span>
        <span>./data/addressbook.xml</span>
      </StatusBar>
      <BottomEdge />
    </Window>
  </>
);

export default App;
